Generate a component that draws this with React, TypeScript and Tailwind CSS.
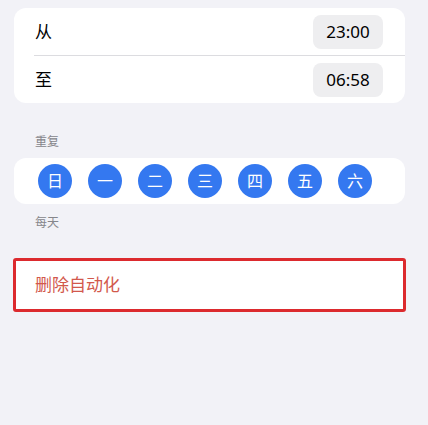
import React from "react";

const days = ["日", "一", "二", "三", "四", "五", "六"];
const font = { fontFamily: '"Noto Sans", "Noto Sans CJK SC", sans-serif' };

export default function App() {
  return (
    <div
      className="w-full h-[425px] bg-[#f2f2f7] pl-[14px] pr-[23px] pt-[8px] text-black"
      style={font}
    >
      <div className="bg-white rounded-[12px] overflow-hidden">
        <div className="flex items-center justify-between h-[47px] pl-[21px] pr-[22px]">
          <span className="text-[17px]">从</span>
          <span className="flex items-center justify-center w-[70px] h-[34px] rounded-[8px] bg-[#eeeef0] text-[17px]">
            23:00
          </span>
        </div>
        <div className="ml-[20px] h-px bg-[#dcdce0]" />
        <div className="flex items-center justify-between h-[47px] pl-[21px] pr-[22px]">
          <span className="text-[17px]">至</span>
          <span className="flex items-center justify-center w-[70px] h-[34px] rounded-[8px] bg-[#eeeef0] text-[17px]">
            06:58
          </span>
        </div>
      </div>

      <div className="mt-[30px] mb-[7px] pl-[21px] text-[12px] leading-[18px] text-[#86868b]">
        重复
      </div>
      <div className="bg-white rounded-[12px] h-[46px] flex items-center pl-[24px] gap-[16px]">
        {days.map((d) => (
          <div
            key={d}
            className="w-[34px] h-[34px] rounded-full bg-[#3478f0] text-white flex items-center justify-center text-[16px]"
          >
            {d}
          </div>
        ))}
      </div>
      <div className="mt-[10px] pl-[21px] text-[12px] leading-[18px] text-[#86868b]">
        每天
      </div>

      <div className="mt-[26px] -mx-[1px] h-[54px] bg-white border-[3px] border-[#dc2a2e] rounded-[3px] flex items-center pl-[19px]">
        <span className="text-[17px] text-[#d2584c]">删除自动化</span>
      </div>
    </div>
  );
}
